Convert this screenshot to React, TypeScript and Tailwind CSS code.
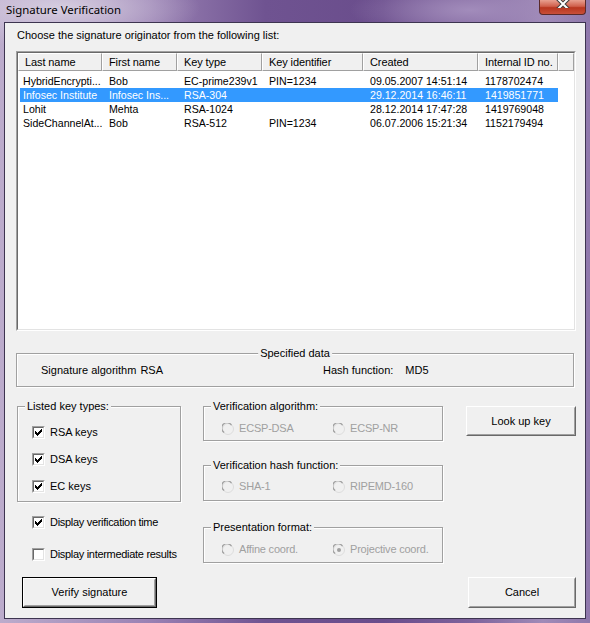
import React from "react";

const F = { fontFamily: '"Liberation Sans", Arial, sans-serif' };

function Check({ checked }: { checked: boolean }) {
  return (
    <div className="w-[13px] h-[13px] border border-t-[#a0a0a0] border-l-[#a0a0a0] border-r-white border-b-white shrink-0">
      <div className="w-full h-full border border-t-[#696969] border-l-[#696969] border-r-[#e3e3e3] border-b-[#e3e3e3] bg-white flex items-center justify-center">
        {checked && (
          <svg width="7" height="7" viewBox="0 0 7 7">
            <path d="M0 2h1v1h1v1h1V3h1V2h1V1h1V0h1v3H6v1H5v1H4v1H3v1H2V6H1V5H0z" fill="#000" />
          </svg>
        )}
      </div>
    </div>
  );
}

function CheckRow({ checked, label, tight }: { checked: boolean; label: string; tight?: boolean }) {
  return (
    <div className="flex items-center h-[13px] gap-[5px]">
      <Check checked={checked} />
      <span
        className={
          "text-[11px] leading-[13px] text-black whitespace-nowrap " + (tight ? "tracking-[-0.3px]" : "")
        }
      >
        {label}
      </span>
    </div>
  );
}

function Radio({ checked, label }: { checked?: boolean; label: string }) {
  return (
    <div className="flex items-center h-[13px] gap-[5px]">
      <svg width="12" height="12" viewBox="0 0 12 12" className="shrink-0">
        <circle cx="6" cy="6" r="5.5" fill="#f0f0f0" stroke="#dcdcdc" />
        <path d="M9.5 2.2 A5.3 5.3 0 1 0 2.2 9.5" fill="none" stroke="#a0a0a0" strokeWidth="1.2" />
        {checked && <circle cx="6" cy="6" r="2" fill="#a0a0a0" />}
      </svg>
      <span className="text-[11px] leading-[13px] text-[#a0a0a0] whitespace-nowrap tracking-[-0.2px]">{label}</span>
    </div>
  );
}

function Group({
  label,
  className,
  center,
  children,
}: {
  label: string;
  className: string;
  center?: boolean;
  children?: React.ReactNode;
}) {
  return (
    <div
      className={
        "relative border border-[#a0a0a0] shadow-[inset_1px_1px_0_#ffffff,1px_1px_0_#ffffff] " + className
      }
    >
      <span
        className={
          "absolute -top-[7px] bg-[#f0f0f0] px-[2px] text-[11px] leading-[13px] text-black whitespace-nowrap " +
          (center ? "left-1/2 -translate-x-1/2" : "left-[7px]")
        }
      >
        {label}
      </span>
      {children}
    </div>
  );
}

function Button({ label, def, className }: { label: string; def?: boolean; className: string }) {
  const inner = (
    <div className="w-full h-full border border-t-white border-l-white border-r-[#696969] border-b-[#696969] bg-[#f0f0f0]">
      <div className="w-full h-full border border-t-transparent border-l-transparent border-r-[#a0a0a0] border-b-[#a0a0a0] flex items-center justify-center text-[11px] text-black">
        {label}
      </div>
    </div>
  );
  return def ? <div className={"border border-black " + className}>{inner}</div> : <div className={className}>{inner}</div>;
}

const cols = [
  { name: "Last name", w: 84 },
  { name: "First name", w: 75 },
  { name: "Key type", w: 85 },
  { name: "Key identifier", w: 101 },
  { name: "Created", w: 115 },
  { name: "Internal ID no.", w: 80 },
];

const rows = [
  ["HybridEncrypti...", "Bob", "EC-prime239v1", "PIN=1234", "09.05.2007 14:51:14", "1178702474"],
  ["Infosec Institute", "Infosec Ins...", "RSA-304", "", "29.12.2014 16:46:11", "1419851771"],
  ["Lohit", "Mehta", "RSA-1024", "", "28.12.2014 17:47:28", "1419769048"],
  ["SideChannelAt...", "Bob", "RSA-512", "PIN=1234", "06.07.2006 15:21:34", "1152179494"],
];

export default function App() {
  return (
    <div
      className="w-[590px] h-[623px] overflow-hidden bg-[radial-gradient(ellipse_140px_40px_at_60px_8px,#d6cde0_0%,rgba(214,205,224,0)_100%),radial-gradient(ellipse_120px_30px_at_470px_10px,#a28cbb_0%,rgba(162,140,187,0)_100%),linear-gradient(90deg,#bcaccc_0%,#9a82b4_25%,#6f5391_45%,#6a4d8c_65%,#7e639c_80%,#a08bb8_92%,#8f78ab_100%)]"
      style={F}
    >
      <div className="h-[22px] flex items-start justify-between">
        <span
          className="pl-[6px] pt-[1px] text-[11.4px] leading-[17px] text-black"
          style={{ fontFamily: '"Noto Sans", "Open Sans", sans-serif' }}
        >
          Signature Verification
        </span>
        <div className="mr-[4px] w-[47px] h-[15px] rounded-b-[4px] border border-t-0 border-[#5a2a2a] bg-[linear-gradient(180deg,#e8a090_0%,#d0604c_45%,#b8361f_55%,#c9503a_100%)] flex items-start justify-center overflow-hidden">
          <svg width="14" height="10" viewBox="0 0 14 10" className="-mt-[2px]">
            <path d="M2 1 L12 11 M12 1 L2 11" stroke="#3b3b3b" strokeWidth="4" strokeLinecap="square" />
            <path d="M2 1 L12 11 M12 1 L2 11" stroke="#ffffff" strokeWidth="2" strokeLinecap="square" />
          </svg>
        </div>
      </div>

      <div className="ml-[4px] w-[582px] h-[597px] border border-[#3d3450] bg-[#f0f0f0] flex flex-col">
        <div className="pl-[12px] pt-[6px] text-[11px] leading-[13px] text-black">
          Choose the signature originator from the following list:
        </div>

        <div className="ml-[11px] mt-[9px] w-[560px] h-[280px] border border-t-[#a0a0a0] border-l-[#a0a0a0] border-r-white border-b-white">
          <div className="w-full h-full border border-t-[#696969] border-l-[#696969] border-r-[#e3e3e3] border-b-[#e3e3e3] bg-white overflow-hidden">
            <div className="flex h-[18px]">
              {cols.map((c) => (
                <div
                  key={c.name}
                  className="shrink-0 h-full border border-t-white border-l-white border-r-[#a0a0a0] border-b-[#a0a0a0] bg-[#f0f0f0] pl-[6px] text-[11px] leading-[16px] text-black whitespace-nowrap tracking-[-0.1px]"
                  style={{ width: c.w }}
                >
                  {c.name}
                </div>
              ))}
              <div className="flex-1 h-full border border-t-white border-l-white border-r-[#a0a0a0] border-b-[#a0a0a0] bg-[#f0f0f0]" />
            </div>
            <div className="pt-[3px]">
              {rows.map((r, i) => (
                <div
                  key={i}
                  className={
                    "ml-[2px] w-[538px] h-[14px] flex text-[10.6px] leading-[14px] whitespace-nowrap " +
                    (i === 1 ? "bg-[#3399ff] text-white" : "text-black")
                  }
                >
                  {r.map((cell, j) => (
                    <div
                      key={j}
                      className={"shrink-0 overflow-hidden " + (j === 0 ? "pl-[3px]" : "pl-[7px]")}
                      style={{ width: j === 0 ? cols[0].w - 2 : cols[j].w }}
                    >
                      {cell}
                    </div>
                  ))}
                </div>
              ))}
            </div>
          </div>
        </div>

        <Group label="Specified data" center className="ml-[11px] mt-[22px] w-[558px] h-[34px]">
          <div className="flex items-center h-full pl-[24px] text-[11px] leading-[13px] text-black whitespace-nowrap">
            <span>Signature algorithm</span>
            <span className="ml-[4px]">RSA</span>
            <span className="ml-[160px]">Hash function:</span>
            <span className="ml-[12px]">MD5</span>
          </div>
        </Group>

        <div className="mt-[19px] flex h-[202px]">
          <div className="ml-[12px] w-[164px] flex flex-col">
            <Group label="Listed key types:" className="w-[164px] h-[96px]">
              <div className="flex flex-col pl-[14px] pt-[19px] gap-[14px]">
                <CheckRow checked label="RSA keys" />
                <CheckRow checked label="DSA keys" />
                <CheckRow checked label="EC keys" />
              </div>
            </Group>
            <div className="ml-[15px] mt-[14px]">
              <CheckRow checked tight label="Display verification time" />
            </div>
            <div className="ml-[15px] mt-[19px]">
              <CheckRow checked={false} tight label="Display intermediate results" />
            </div>
            <Button label="Verify signature" def className="ml-[5px] mt-[16px] w-[135px] h-[31px]" />
          </div>

          <div className="ml-[22px] w-[240px] flex flex-col">
            <Group label="Verification algorithm:" className="w-[240px] h-[35px]">
              <div className="flex pl-[18px] pt-[15px]">
                <div className="w-[111px]">
                  <Radio label="ECSP-DSA" />
                </div>
                <Radio label="ECSP-NR" />
              </div>
            </Group>
            <Group label="Verification hash function:" className="mt-[24px] w-[240px] h-[36px]">
              <div className="flex pl-[18px] pt-[14px]">
                <div className="w-[111px]">
                  <Radio label="SHA-1" />
                </div>
                <Radio label="RIPEMD-160" />
              </div>
            </Group>
            <Group label="Presentation format:" className="mt-[26px] w-[240px] h-[36px]">
              <div className="flex pl-[18px] pt-[15px]">
                <div className="w-[111px]">
                  <Radio label="Affine coord." />
                </div>
                <Radio checked label="Projective coord." />
              </div>
            </Group>
          </div>

          <div className="ml-[23px] w-[110px] flex flex-col justify-between">
            <Button label="Look up key" className="w-[110px] h-[30px]" />
            <Button label="Cancel" className="ml-[2px] w-[108px] h-[31px]" />
          </div>
        </div>
      </div>
    </div>
  );
}
